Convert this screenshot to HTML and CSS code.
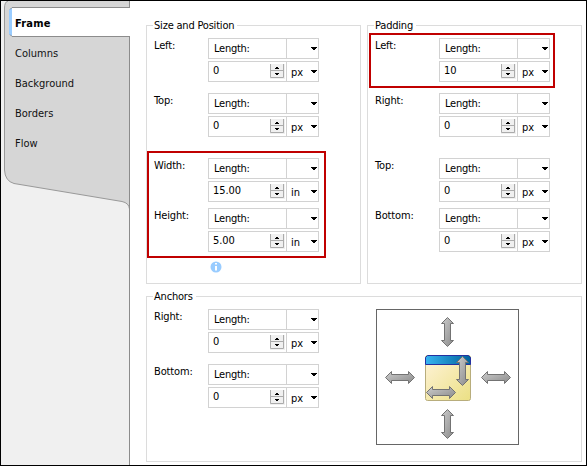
FILE: index.html
```
<!DOCTYPE html>
<html lang="en">
<head>
<meta charset="utf-8">
<title>Frame properties</title>
<link rel="stylesheet" href="styles.css">
<script src="fields.js" defer></script>
</head>
<body>
<div class="dialog">
  <nav class="sidebar">
    <svg class="tab-shape" width="129" height="464" viewBox="1 1 129 464">
      <path d="M7.500 1Q4.500 2 4.500 8V170Q5 181 14 183.500L122 201.500Q129 203 129.500 209V1Z" fill="#d6d6d6"/>
      <path d="M8 1Q4.500 2 4.500 8V170Q5 181 14 183.500L122 201.500Q129 203 129.500 209" fill="none" stroke="#999"/>
      <path d="M129.500 1V465" stroke="#8c8c8c"/>
      <path d="M130 7.500H12L9.500 10V34L12 36.500H130Z" fill="#fff"/>
      <path d="M9 10L11 8H12V36H11L9 34Z" fill="#99ccff"/>
      <path d="M130 7.500H12L10 9.500M10 34.500L12 36.500H130" fill="none" stroke="#8c8c8c"/>
    </svg>
    <div class="tabs">
      <a class="tab active">Frame</a>
      <a class="tab">Columns</a>
      <a class="tab">Background</a>
      <a class="tab">Borders</a>
      <a class="tab">Flow</a>
    </div>
  </nav>
  <main class="content">
    <section class="group size">
      <h2>Size and Position</h2>
      <div class="field" data-label="Left:" data-value="0" data-unit="px"></div>
      <div class="field" data-label="Top:" data-value="0" data-unit="px"></div>
      <div class="field third" data-label="Width:" data-value="15.00" data-unit="in"></div>
      <div class="field close" data-label="Height:" data-value="5.00" data-unit="in"></div>
      <svg class="info" width="12" height="12" viewBox="0 0 12 12"><circle cx="6" cy="6" r="5.500" fill="#99ccff"/><path d="M5 2h2v1.500H5zM5 5H7v4.500H5z" fill="#fff"/></svg>
      <div class="mark mark-size"></div>
    </section>
    <section class="group padding">
      <h2>Padding</h2>
      <div class="field" data-label="Left:" data-value="10" data-unit="px"></div>
      <div class="field" data-label="Right:" data-value="0" data-unit="px"></div>
      <div class="field third" data-label="Top:" data-value="0" data-unit="px"></div>
      <div class="field close" data-label="Bottom:" data-value="0" data-unit="px"></div>
      <div class="mark mark-padding"></div>
    </section>
    <section class="group anchors">
      <h2>Anchors</h2>
      <div class="anchor-fields">
        <div class="field" data-label="Right:" data-value="0" data-unit="px"></div>
        <div class="field" data-label="Bottom:" data-value="0" data-unit="px"></div>
      </div>
      <svg class="diagram" width="143" height="136" viewBox="376 309 143 136">
        <defs>
          <linearGradient id="metal" x1="0" y1="0" x2="1" y2="1"><stop stop-color="#cdcdcd"/><stop offset="1" stop-color="#8a8a8a"/></linearGradient>
          <linearGradient id="bar"><stop stop-color="#37b4f0"/><stop offset="1" stop-color="#00629c"/></linearGradient>
          <linearGradient id="paper" x1="0" y1="0" x2="1" y2="1"><stop stop-color="#fff3da"/><stop offset="1" stop-color="#ebe084"/></linearGradient>
          <path id="horizontal" d="M.5 6.500L6.500.5V3.500H23.500V.5L29.500 6.500L23.500 12.500V9.500H6.500V12.500Z" fill="url(#metal)" stroke="#737373"/>
          <path id="vertical" d="M6.500.5L12.500 6.500H9.500V23.500H12.500L6.500 29.500L.5 23.500H3.500V6.500H.5Z" fill="url(#metal)" stroke="#737373"/>
        </defs>
        <rect x="376.500" y="309.500" width="142" height="135" fill="#fff" stroke="#666"/>
        <rect x="425.500" y="355.500" width="45" height="45" rx="2" fill="url(#paper)" stroke="#b8ad7c"/>
        <path d="M425.500 364.500V357.500L427.500 355.500H468.500L470.500 357.500V364.500Z" fill="url(#bar)" stroke="#2430a0"/>
        <use href="#vertical" x="441" y="317"/>
        <use href="#vertical" x="441" y="409"/>
        <use href="#horizontal" x="385" y="371"/>
        <use href="#horizontal" x="481" y="371"/>
        <use href="#vertical" x="456" y="356"/>
        <use href="#horizontal" x="426" y="386"/>
      </svg>
    </section>
  </main>
</div>
</body>
</html>
```
FILE: styles.css
```
* { box-sizing: border-box; }
body { margin: 0; font: 11px/14px "DejaVu Sans Condensed", "DejaVu Sans", sans-serif; font-stretch: condensed; color: #000; }
.dialog { width: 587px; height: 466px; border: 1px solid #000; background: #fff; display: flex; overflow: hidden; }
.sidebar { width: 129px; flex: none; background: #f0f0f0; display: grid; }
.tab-shape, .tabs { grid-area: 1 / 1; }
.tabs { z-index: 1; padding: 8px 0 0 14px; display: flex; flex-direction: column; }
.tab { height: 30px; line-height: 30px; color: #111; }
.active { font-weight: bold; color: #000; letter-spacing: .2px; }
.content { padding: 24px 0 0 16px; display: grid; grid-template-columns: 215px 215px; grid-template-rows: 259px 166px; column-gap: 6px; row-gap: 12px; align-content: start; }
.group { border: 1px solid #dcdcdc; position: relative; padding: 0 0 0 7px; }
h2 { font: inherit; letter-spacing: -.2px; width: max-content; height: 14px; margin: -7px 0 0 -1px; padding: 0 3px 0 1px; background: #fff; }
.field { display: grid; grid-template-columns: 54px 111px; margin-bottom: 11px; height: 44px; }
h2 + .field { margin-top: 5px; }
.padding .field { grid-template-columns: 64px 111px; }
.label { padding-top: 1px; letter-spacing: -.15px; }
.controls { display: grid; gap: 2px; }
.select, .entry { height: 21px; border: 1px solid #d2d2d2; display: grid; grid-template-columns: 78px 31px; }
.select-text { border-right: 1px solid #d2d2d2; padding: 3px 0 0 5px; letter-spacing: -.25px; }
.select-text, .value, .unit { min-width: 0; }
.value { border-right: 1px solid #d2d2d2; padding: 1px 1px 0 4px; display: flex; justify-content: space-between; }
.number { padding-top: 1px; letter-spacing: -.1px; }
.spinner { margin-top: 1px; }
.unit { display: flex; justify-content: space-between; padding: 4px 1px 0 4px; }
.chevron { margin-top: 4px; }
.select .chevron { margin: 8px 1px 0 auto; }
.third { margin-top: 21px; margin-bottom: 6px; }
.close { margin-bottom: 0; }
.info { display: block; margin: 9px 0 0 56px; }
.mark { position: absolute; border: 2px solid #c00000; }
.mark-size { left: 0; top: 125px; width: 179px; height: 107px; }
.mark-padding { left: 1px; top: 7px; width: 186px; height: 55px; }
.anchors { grid-column: span 2; display: grid; grid-template-columns: 222px 143px; grid-template-rows: 7px auto; align-content: start; }
.anchors h2 { grid-column: span 2; }
.anchor-fields { padding-top: 5px; }
.diagram { margin-top: 5px; }
```
FILE: fields.js
```
const arrow = '<svg class="chevron" width="6" height="3" viewBox="0 0 6 3"><path d="M0 0H6V1H5V2H4V3H2V2H1V1H0Z"/></svg>';
const spinner = '<svg class="spinner" width="15" height="15" viewBox="0 0 15 15"><path d="M0 0H15V15H0Z" fill="#f0f0f0"/><path d="M.5 0V13.500H13.500V0M0 6.500H14" fill="none" stroke="#ababab"/><path d="M6 3H8V4H9V5H5V4H6ZM5 9H9V10H8V11H6V10H5Z"/></svg>';
document.querySelectorAll('.field').forEach(field => {
  const { label, value, unit } = field.dataset;
  field.innerHTML = `<span class="label">${label}</span><div class="controls">
    <div class="select"><span class="select-text">Length:</span>${arrow}</div>
    <div class="entry"><div class="value"><span class="number">${value}</span>${spinner}</div><div class="unit"><span>${unit}</span>${arrow}</div></div>
  </div>`;
});
```
